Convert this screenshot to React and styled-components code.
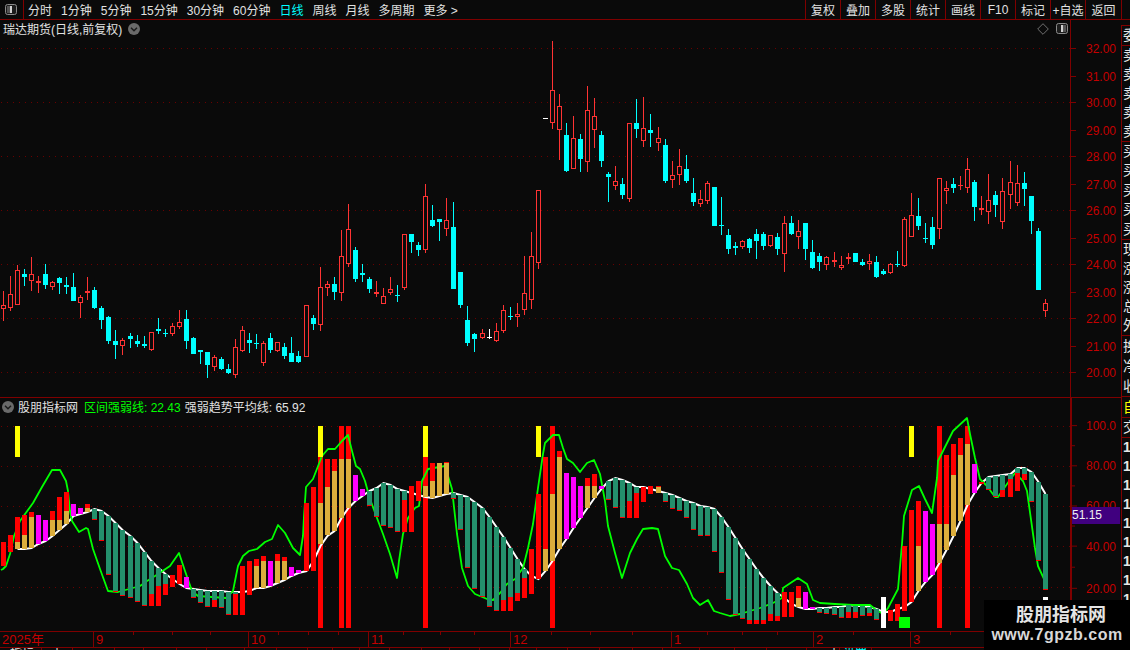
import React from "react";
import styled, { createGlobalStyle } from "styled-components";

const BG = "#0a0a0a";
const GRID = "#7f0000";
const AXIS_TEXT = "#c40000";
const CANDLE_RED = "#ff3333";
const CANDLE_CYAN = "#00ffff";
const T = "#24906c";
const R = "#ff0000";
const G = "#dcae3c";
const M = "#ff00ff";

// [high, body top, body bottom, low, kind], all in page pixels
const CANDLES = [
  [291,305,309,321,"r"],[276,294,308,311,"r"],[265,270,305,305,"r"],[269,274,277,286,"c"],[257,274,281,291,"r"],
  [276,281,283,293,"r"],[264,274,285,289,"c"],[281,282,287,290,"r"],[277,278,283,294,"c"],[277,285,287,294,"c"],
  [273,287,301,301,"c"],[295,297,303,318,"r"],[277,291,293,300,"r"],[287,290,308,309,"c"],[306,308,320,329,"c"],
  [316,317,341,344,"c"],[330,341,345,359,"c"],[338,340,346,355,"r"],[333,336,339,348,"c"],[335,341,344,347,"c"],
  [336,344,346,348,"c"],[332,332,350,351,"r"],[318,329,331,334,"c"],[329,333,334,337,"c"],[323,326,334,336,"r"],
  [310,322,327,329,"r"],[310,319,341,349,"c"],[337,338,354,354,"c"],[350,350,352,364,"c"],[352,352,365,378,"c"],
  [355,357,367,371,"r"],[357,359,369,370,"c"],[364,369,373,374,"c"],[339,347,375,378,"r"],[326,330,351,352,"r"],
  [333,340,343,353,"c"],[334,343,344,349,"c"],[341,343,363,366,"r"],[333,338,350,353,"c"],[342,342,351,352,"r"],
  [343,347,356,359,"c"],[337,353,362,362,"c"],[351,356,362,363,"c"],[305,305,357,357,"r"],[315,318,324,330,"c"],
  [267,287,325,331,"r"],[281,284,288,296,"r"],[277,284,292,300,"c"],[230,256,293,301,"r"],[204,229,264,267,"r"],
  [247,250,279,282,"c"],[264,273,275,282,"c"],[277,279,289,293,"c"],[281,292,294,297,"r"],[288,296,304,304,"r"],
  [277,289,293,295,"r"],[285,295,296,302,"c"],[234,234,288,290,"r"],[234,234,242,253,"c"],[242,245,250,256,"c"],
  [184,196,250,253,"r"],[205,220,226,227,"c"],[219,219,222,241,"c"],[198,220,229,236,"r"],[202,227,289,289,"c"],
  [272,272,305,308,"c"],[306,320,343,346,"c"],[333,334,339,352,"c"],[329,333,338,339,"r"],[329,337,338,339,"w"],
  [323,331,341,342,"r"],[305,310,331,333,"r"],[307,316,317,320,"c"],[303,314,317,327,"r"],[256,293,310,315,"r"],
  [232,256,300,309,"r"],[190,190,263,269,"r"],[118,118,119,119,"w"],[41,90,123,129,"r"],[94,106,130,160,"r"],
  [123,135,171,172,"c"],[116,138,169,169,"r"],[134,139,159,172,"c"],[86,110,162,172,"r"],[98,116,130,148,"r"],
  [131,135,161,167,"c"],[172,174,177,202,"c"],[166,181,186,190,"r"],[178,184,195,199,"c"],[123,123,199,202,"r"],
  [99,123,129,138,"c"],[97,128,141,147,"r"],[114,130,133,147,"c"],[127,138,143,151,"r"],[139,145,181,183,"c"],
  [161,175,180,188,"r"],[149,166,175,185,"r"],[155,169,181,183,"c"],[178,193,202,206,"c"],[190,199,204,207,"r"],
  [181,183,201,204,"r"],[187,187,226,226,"c"],[197,225,226,235,"c"],[229,235,249,254,"c"],[242,246,248,255,"c"],
  [240,241,247,249,"r"],[238,239,248,253,"c"],[229,234,241,259,"c"],[232,234,246,250,"c"],[235,235,246,247,"r"],
  [233,237,249,255,"c"],[216,223,254,272,"r"],[216,223,234,235,"c"],[220,231,237,249,"r"],[223,223,249,260,"c"],
  [240,252,268,269,"c"],[253,256,262,271,"c"],[256,257,265,270,"r"],[252,260,262,267,"r"],[256,265,268,270,"r"],
  [253,257,259,264,"r"],[253,253,262,262,"c"],[259,262,265,266,"c"],[254,261,264,270,"r"],[256,262,277,278,"c"],
  [269,271,274,275,"c"],[263,264,273,274,"r"],[251,264,265,267,"c"],[217,219,266,267,"r"],[193,215,237,237,"r"],
  [198,216,226,230,"c"],[223,238,239,243,"c"],[217,227,245,249,"c"],[178,178,229,239,"r"],[181,188,191,204,"r"],
  [178,184,188,193,"c"],[176,185,186,190,"r"],[158,169,188,193,"r"],[180,182,207,221,"c"],[196,208,210,215,"r"],
  [174,200,212,224,"r"],[191,195,205,217,"c"],[178,191,222,229,"r"],[161,182,195,209,"r"],[165,183,203,206,"r"],
  [172,183,189,206,"c"],[196,196,221,234,"c"],[228,231,290,290,"c"],[299,303,311,317,"r"],
];

// stacked indicator bars per candle: colour, y1, y2, colour, y1, y2 ...
const STACKS = [
  [R,541,565],[R,534,551],[R,516,541,G,541,548],[R,514,534,G,534,548],[R,511,516,G,516,547],
  [M,514,543],[M,519,540],[R,510,519,G,519,535],[R,496,519,G,519,529],[R,491,510,G,510,523],
  [M,503,515],[M,507,513],[R,503,507,G,507,511],[T,508,518,R,518,519],[T,510,539,R,539,540],
  [T,515,573,R,573,574],[T,522,590,R,590,591],[T,529,594,R,594,595],[T,535,596,R,596,597],[T,542,600,R,600,601],
  [T,551,604,R,604,605],[T,560,593,R,593,605],[T,567,585,R,585,605],[T,573,583,R,583,594],[R,574,586],
  [R,564,583],[M,576,587],[T,588,596,R,596,597],[T,589,601,R,601,602],[T,590,605,R,605,606],
  [T,590,599,R,599,606],[T,590,606,R,606,607],[T,591,613,R,613,614],[T,591,593,R,593,614],[R,565,614],
  [R,560,594],[R,558,565,G,565,587],[R,555,560,G,560,587],[M,560,585],[R,553,560,G,560,582],
  [R,556,560,G,560,579],[M,566,575],[M,569,572],[R,502,570],[R,486,570],
  [G,502,543],[R,458,486,G,486,534],[R,458,470,G,470,530],[G,458,517],[G,458,507],
  [M,474,500],[M,488,495],[T,490,504,R,504,505],[T,487,515,R,515,516],[T,482,524,R,524,525],
  [T,484,526,R,526,527],[T,488,530,R,530,531],[T,490,499,R,499,531],[R,485,531],[R,480,500],
  [G,485,496],[R,462,480,G,480,497],[G,462,495],[R,461,462,G,462,493],[T,492,497,R,497,498],
  [T,494,528,R,528,529],[T,496,566,R,566,567],[T,501,587,R,587,588],[T,507,595,R,595,596],[T,516,605,R,605,606],
  [T,526,609,R,609,610],[T,536,599,R,599,610],[T,547,596,R,596,610],[T,558,592,R,592,600],[T,568,577,R,577,597],
  [R,548,593],[R,493,578],[R,456,548,G,548,570],[G,493,560],[R,450,456,G,456,548],
  [M,472,538],[M,476,527],[M,485,517],[R,477,485,G,485,507],[R,473,485,G,485,497],
  [M,485,488],[T,480,498,R,498,499],[T,477,506,R,506,507],[T,479,516,R,516,517],[T,482,500,R,500,517],
  [T,486,492,R,492,517],[R,486,501],[R,485,493],[R,485,486,G,486,492],[T,492,500,R,500,501],
  [T,494,507,R,507,508],[T,497,509,R,509,510],[T,500,516,R,516,517],[T,502,528,R,528,529],[T,505,534,R,534,535],
  [T,506,534,R,534,535],[T,508,550,R,550,551],[T,516,571,R,571,572],[T,526,598,R,598,599],[T,537,613,R,613,614],
  [T,548,617,R,617,618],[T,558,619,R,619,623],[T,568,619,R,619,623],[T,577,619,R,619,623],[T,585,613,R,613,620],
  [T,592,615,R,615,620],[R,591,616],[R,591,616],[R,585,597,G,597,606],[M,591,608],
  [M,606,608],[T,607,611,R,611,612],[T,607,612,R,612,613],[T,606,613,R,613,614],[T,606,616,R,616,617],
  [T,604,611,R,611,617],[T,605,611,R,611,617],[T,605,614,R,614,615],[T,606,612,R,612,615],[T,608,618,R,618,619],
  ["#ffffff",596,627],[R,609,620],[R,603,620],[R,545,610],[R,509,601],
  [R,500,545,G,545,590],[M,510,581],[M,523,574],[G,523,562],[R,454,523,G,523,549],
  [R,443,474,G,474,535],[R,437,454,G,454,520],[G,443,504],[M,463,492],[R,481,483],
  [T,476,488,R,488,489],[T,475,495,R,495,496],[T,474,489,R,489,496],[T,473,478,R,478,496],[T,467,472,R,472,490],
  [T,467,473,R,473,479],[T,471,500,R,500,501],[T,481,559,R,559,560],[T,493,588,R,588,589,"#ffffff",596,602],
];

const FULL_BARS = [[45,456],[48,425],[49,425],[60,456],[78,425],[133,425],[137,425]];
const SIGNAL_BARS = [2,45,60,76,129];

const AVERAGE_LINE = [
  565,551,548,548,547,543,540,535,529,523,515,513,511,508,510,515,522,529,535,542,551,560,567,573,578,583,587,588,589,590,
  590,590,591,591,591,590,587,587,585,582,579,575,572,570,560,545,535,530,517,507,500,495,490,487,482,484,488,490,492,494,
  496,497,495,493,492,494,496,501,507,516,526,536,547,558,568,575,578,570,560,548,538,527,517,507,497,488,480,477,479,482,
  486,486,488,490,492,494,497,500,502,505,506,508,516,526,537,548,558,568,577,585,592,597,603,606,608,608,607,607,606,606,
  604,605,605,606,608,611,611,608,606,601,590,581,574,562,549,535,520,504,492,482,476,475,474,473,467,467,471,481,493,
];

const STRENGTH_LINE = [
  [1,569],[3,568],[6,565],[10,553],[14,535],[20,520],[33,502],[42,486],[52,469],[60,469],[66,480],[68,490],[70,510],[72,520],[79,531],
  [86,527],[88,528],[93,548],[100,568],[108,590],[118,591],[140,585],[147,580],[155,575],[170,565],[179,552],[185,570],[192,590],[198,595],
  [226,597],[233,590],[238,565],[243,555],[249,550],[257,548],[265,541],[272,538],[278,524],[285,532],[293,547],[300,554],[303,535],[304,515],
  [306,486],[313,478],[322,455],[328,448],[335,448],[342,440],[348,434],[352,450],[356,465],[360,468],[365,480],[370,498],[377,517],[383,533],
  [390,553],[397,577],[399,560],[403,533],[408,517],[415,507],[419,505],[422,480],[428,468],[445,465],[452,488],[457,533],[462,567],[468,585],
  [475,593],[487,598],[493,599],[500,592],[507,583],[515,578],[523,567],[528,547],[533,523],[538,487],[543,453],[545,442],[553,434],[559,434],
  [563,447],[567,458],[573,462],[580,471],[587,462],[594,459],[600,473],[605,500],[608,525],[615,552],[622,577],[630,552],[637,538],[643,528],
  [652,527],[658,528],[665,555],[672,567],[679,569],[687,583],[693,597],[700,604],[708,599],[714,610],[720,612],[730,615],[740,613],[760,607],
  [773,602],[782,597],[783,587],[798,577],[807,583],[813,599],[820,602],[835,603],[853,604],[870,604],[875,608],[883,613],[888,607],[898,588],
  [902,543],[904,515],[912,489],[919,485],[925,498],[932,512],[937,477],[938,460],[947,442],[953,430],[967,417],[970,433],[975,457],[980,478],
  [987,485],[995,496],[998,496],[1007,483],[1015,472],[1023,480],[1027,490],[1035,547],[1038,565],[1044,578],
];

const PRICE_TICKS = ["32.00","31.00","30.00","29.00","28.00","27.00","26.00","25.00","24.00","23.00","22.00","21.00","20.00"];
const PRICE_GRID = [48,102,156,210,264,318,372];
const INDICATOR_TICKS = [["100.0",425],["80.00",465],["60.00",505],["40.00",545],["20.00",587]];
const INDICATOR_MINOR = [445,485,525,566,607];

const MONTHS = [["2025年",94],["9",155],["10",120],["11",142],["12",161],["1",142],["2",97],["3",210]];
const TIME_TICKS = [133,172,210,278,308,338,403,440,474,551,590,632,707,742,777,853,950,990,1030];
const TAB_EDGES = [42,73,115,144,177,207,245,277,308,333,360,390,422,450,480,510,537,568,600,633,663,700,735,767,807,840,872];

const PERIODS = ["分时","1分钟","5分钟","15分钟","30分钟","60分钟","日线","周线","月线","多周期","更多 >"];
const ACTIONS = ["复权","叠加","多股","统计","画线","F10","标记","+自选","返回"];
const SIDE_GROUPS = [
  { height: 19, rows: ["委"] },
  { height: 19, rows: ["卖","卖","卖","卖","卖"] },
  { height: 19.4, rows: ["买","买","买","买","买"] },
  { height: 19, rows: ["现","涨","涨","总","外"] },
  { height: 20, rows: ["换","净","收"] },
];

const barLeft = (i) => Math.round(3.3 + 7.04 * i - 2.5);

const GlobalStyle = createGlobalStyle`
  html, body {
    margin: 0;
    background: ${BG};
  }
  body {
    font-family: "Liberation Sans", "Noto Sans CJK SC", sans-serif;
    font-size: 12px;
  }
`;

const Terminal = styled.div`
  position: relative;
  width: 1130px;
  height: 650px;
  overflow: hidden;
  display: flex;
  flex-direction: column;
  background: ${BG};
  color: #e2e2e2;
`;

const Toolbar = styled.div`
  flex: 0 0 20px;
  box-sizing: border-box;
  display: flex;
  align-items: stretch;
  padding-right: 8px;
  border-bottom: 1px solid ${GRID};
`;

const ToggleBox = styled.div`
  flex: 0 0 24px;
  box-sizing: border-box;
  display: flex;
  align-items: center;
  justify-content: center;
  padding-right: 1px;
  border-right: 1px solid ${GRID};
`;

const PeriodList = styled.div`
  display: flex;
  align-items: center;
  gap: 9px;
  padding-left: 4px;
`;

const Period = styled.span`
  color: ${(p) => (p.$active ? "#00ffff" : "#e2e2e2")};
  white-space: nowrap;
`;

const ActionList = styled.div`
  margin-left: auto;
  display: flex;
`;

const Action = styled.div`
  width: 35px;
  box-sizing: border-box;
  display: flex;
  align-items: center;
  justify-content: center;
  white-space: nowrap;
  border-left: 1px solid ${GRID};
  &:last-child {
    width: 37px;
    border-right: 1px solid ${GRID};
  }
`;

const Workspace = styled.div`
  flex: 1;
  display: flex;
  min-height: 0;
`;

const ChartColumn = styled.div`
  flex: 0 0 1121px;
  display: flex;
  flex-direction: column;
`;

const Pane = styled.div`
  flex: 0 0 ${(p) => p.$height}px;
  box-sizing: border-box;
  display: flex;
  border-bottom: ${(p) => (p.$ruled ? `1px solid ${GRID}` : "none")};
`;

const Plot = styled.div`
  flex: 0 0 1070px;
  display: flex;
  flex-direction: column;
`;

const PaneHeader = styled.div`
  flex: 0 0 ${(p) => p.$height}px;
  box-sizing: border-box;
  display: flex;
  align-items: center;
  gap: ${(p) => p.$gap || 0}px;
  padding-left: ${(p) => p.$inset}px;
  padding-bottom: ${(p) => p.$lift || 0}px;
  white-space: nowrap;
`;

const PaneTools = styled.div`
  margin-left: auto;
  display: flex;
  align-items: center;
  gap: 7px;
  padding-right: 2px;
`;

const Legend = styled.span`
  color: ${(p) => p.$color};
  margin-left: ${(p) => p.$shift || 0}px;
`;

const ChartSvg = styled.svg`
  display: block;
  width: 1070px;
  flex: 1;
`;

const Axis = styled.div`
  position: relative;
  flex: 0 0 51px;
  box-sizing: border-box;
  border-left: ${(p) => p.$rule}px solid ${GRID};
`;

const AxisSvg = styled.svg`
  display: block;
  width: 100%;
  height: 100%;
  font-family: "Liberation Sans", sans-serif;
  font-size: 12px;
`;

const PriceTag = styled.div`
  position: absolute;
  left: 0;
  right: 1px;
  top: 109px;
  height: 17px;
  line-height: 17px;
  background: #40007f;
  color: #f0f0f0;
`;

const TimeAxis = styled.div`
  position: relative;
  flex: 0 0 17px;
  box-sizing: border-box;
  display: flex;
  border-top: 1px solid ${GRID};
  border-bottom: 1px solid ${GRID};
`;

const Month = styled.div`
  flex: 0 0 ${(p) => p.$width}px;
  box-sizing: border-box;
  padding-left: 2px;
  font-size: 13px;
  line-height: 15px;
  color: ${AXIS_TEXT};
  border-right: 1px solid ${GRID};
  &:last-child {
    border-right: none;
  }
`;

const TimeTick = styled.i`
  position: absolute;
  top: 0;
  width: 1px;
  height: 3px;
  background: ${GRID};
`;

const TabStrip = styled.div`
  flex: 1;
  display: flex;
  overflow: hidden;
`;

const Tab = styled.div`
  flex: 0 0 ${(p) => p.$width}px;
  box-sizing: border-box;
  padding-left: ${(p) => p.$pad || 0}px;
  line-height: 12px;
  overflow: hidden;
  white-space: nowrap;
  color: ${(p) => p.$color || "#e2e2e2"};
  border-right: 1px solid ${GRID};
`;

const SidePanel = styled.div`
  flex: 1;
  box-sizing: border-box;
  display: flex;
  flex-direction: column;
  padding-top: 5px;
  overflow: hidden;
`;

const SideGroup = styled.div`
  flex: 0 0 auto;
  box-sizing: border-box;
  border-top: 1px solid ${GRID};
  border-left: 1px solid ${GRID};
  padding-left: 1px;
`;

const SideRow = styled.div`
  height: ${(p) => p.$height}px;
  line-height: ${(p) => p.$height}px;
  font-size: 14px;
  font-weight: ${(p) => (p.$bold ? 700 : 400)};
  color: ${(p) => p.$color || "#e6e6e6"};
  white-space: nowrap;
`;

const Watermark = styled.div`
  position: absolute;
  right: 0;
  bottom: 0;
  width: 146px;
  height: 50px;
  background: #000;
  display: flex;
  flex-direction: column;
  align-items: center;
  color: #e4e4e4;
  font-weight: 700;
`;

const WatermarkName = styled.div`
  margin-top: 4px;
  padding-left: 8px;
  font-size: 18px;
  line-height: 22px;
`;

const WatermarkSite = styled.div`
  font-size: 16px;
  line-height: 18px;
  letter-spacing: 0.5px;
  color: #d8d8d8;
`;

function ToggleIcon({ flip }) {
  return (
    <svg width="12" height="11" viewBox="0 0 12 11">
      <rect x="0.5" y="0.5" width="11" height="10" rx="2" fill="#1c1c1c" stroke="#8a8a8a" />
      <rect x={flip ? 2 : 7} y="2" width="3" height="7" fill="#555" />
      <rect x="5" y="2" width="2" height="7" fill="#d0d0d0" />
    </svg>
  );
}

function CircleChevron() {
  return (
    <svg width="12" height="12" viewBox="0 0 12 12">
      <circle cx="6" cy="6" r="6" fill="#6a6a6a" />
      <path d="M3 4.8 L6 7.8 L9 4.8" fill="none" stroke="#1a1a1a" strokeWidth="1.4" />
    </svg>
  );
}

function Candle({ index, candle }) {
  const [hi, top, bottom, lo, kind] = candle;
  const x = barLeft(index);
  const color = kind === "r" ? CANDLE_RED : kind === "c" ? CANDLE_CYAN : "#ffffff";
  const height = bottom - top;
  return (
    <g>
      {top > hi && <rect x={x + 2} y={hi} width="1" height={top - hi} fill={color} />}
      {lo > bottom && <rect x={x + 2} y={bottom} width="1" height={lo - bottom} fill={color} />}
      {kind === "r" && height > 2 ? (
        <rect x={x + 0.5} y={top + 0.5} width="4" height={height - 1} fill={BG} stroke={color} />
      ) : (
        <rect x={x} y={top} width="5" height={Math.max(height, 1)} fill={color} />
      )}
    </g>
  );
}

function GridLines({ rows, width = 1070 }) {
  return rows.map((y) => (
    <line key={y} x1="1" x2={width} y1={y + 0.5} y2={y + 0.5} stroke="#6a0000" strokeDasharray="1 5" />
  ));
}

function PriceChart() {
  return (
    <ChartSvg viewBox="0 37 1070 360" preserveAspectRatio="none" shapeRendering="crispEdges">
      <GridLines rows={PRICE_GRID} />
      {CANDLES.map((candle, i) => (
        <Candle key={i} index={i} candle={candle} />
      ))}
    </ChartSvg>
  );
}

function IndicatorChart() {
  const average = AVERAGE_LINE.slice(2).map((y, i) => `${barLeft(i + 2) + 2.5},${y}`).join(" ");
  const strength = STRENGTH_LINE.map((p) => p.join(",")).join(" ");
  return (
    <ChartSvg viewBox="0 416 1070 214" preserveAspectRatio="none">
      <g shapeRendering="crispEdges">
        <GridLines rows={[425, 465, 505, 545, 586]} />
        {FULL_BARS.map(([i, y]) => (
          <rect key={i} x={barLeft(i)} y={y} width="5" height={627 - y} fill={R} />
        ))}
      </g>
      <polyline points={average} fill="none" stroke="#ffffff" strokeWidth="2" />
      <polyline points={strength} fill="none" stroke="#00ff00" strokeWidth="1.8" strokeLinejoin="round" />
      <g shapeRendering="crispEdges">
        {STACKS.map((stack, i) => {
          const parts = [];
          for (let k = 0; k < stack.length; k += 3) {
            parts.push(
              <rect key={k} x={barLeft(i)} y={stack[k + 1]} width="5" height={stack[k + 2] - stack[k + 1]} fill={stack[k]} />
            );
          }
          return <g key={i}>{parts}</g>;
        })}
        {SIGNAL_BARS.map((i) => (
          <rect key={i} x={barLeft(i)} y="425" width="5" height="31" fill="#ffff00" />
        ))}
        <rect x="899" y="616" width="11" height="11" fill="#00ff00" />
      </g>
    </ChartSvg>
  );
}

function PriceAxis() {
  return (
    <AxisSvg viewBox="0 20 50 377" preserveAspectRatio="none">
      {PRICE_TICKS.map((label, i) => {
        const y = 48 + 27 * i + (i % 2);
        return (
          <g key={label}>
            <rect x="0" y={y} width="5" height="1" fill={GRID} />
            <text x="15" y={y + 5} fill={AXIS_TEXT}>{label}</text>
          </g>
        );
      })}
    </AxisSvg>
  );
}

function IndicatorAxis() {
  return (
    <Axis $rule={2}>
      <AxisSvg viewBox="0 398 49 232" preserveAspectRatio="none">
        {INDICATOR_TICKS.map(([label, y]) => (
          <g key={label}>
            <rect x="0" y={y} width="5" height="1" fill={GRID} />
            <text x="14" y={y + 5} fill={AXIS_TEXT}>{label}</text>
          </g>
        ))}
        {INDICATOR_MINOR.map((y) => (
          <rect key={y} x="0" y={y} width="3" height="1" fill={GRID} />
        ))}
      </AxisSvg>
      <PriceTag>51.15</PriceTag>
    </Axis>
  );
}

function TimeRow() {
  return (
    <TimeAxis>
      {MONTHS.map(([label, width]) => (
        <Month key={label} $width={width}>{label}</Month>
      ))}
      {TIME_TICKS.map((x) => (
        <TimeTick key={x} style={{ left: x }} />
      ))}
    </TimeAxis>
  );
}

function Tabs() {
  return (
    <TabStrip>
      {TAB_EDGES.map((edge, i) => {
        const width = edge - (i ? TAB_EDGES[i - 1] : 0);
        if (i === 0) return <Tab key={edge} $width={width} $pad={10}>指标</Tab>;
        if (i === 1) return <Tab key={edge} $width={width} $pad={9}>十</Tab>;
        if (i === 25) return <Tab key={edge} $width={width} $pad={21}>十</Tab>;
        if (i === 26) return <Tab key={edge} $width={width} $pad={3} $color="#00ffff">设置</Tab>;
        return <Tab key={edge} $width={width} />;
      })}
    </TabStrip>
  );
}

function SideList() {
  return (
    <SidePanel>
      {SIDE_GROUPS.map((group, i) => (
        <SideGroup key={i}>
          {group.rows.map((text, k) => (
            <SideRow key={k} $height={group.height}>{text}</SideRow>
          ))}
        </SideGroup>
      ))}
      <SideGroup>
        <SideRow $height={20} $color="#ffff00">自</SideRow>
      </SideGroup>
      <SideGroup>
        <SideRow $height={19}>交</SideRow>
      </SideGroup>
      <SideGroup>
        {Array.from({ length: 11 }, (_, i) => (
          <SideRow key={i} $height={19} $bold>1</SideRow>
        ))}
      </SideGroup>
    </SidePanel>
  );
}

export default function App() {
  return (
    <>
      <GlobalStyle />
      <Terminal>
        <Toolbar>
          <ToggleBox><ToggleIcon flip /></ToggleBox>
          <PeriodList>
            {PERIODS.map((p) => (
              <Period key={p} $active={p === "日线"}>{p}</Period>
            ))}
          </PeriodList>
          <ActionList>
            {ACTIONS.map((a) => (
              <Action key={a}>{a}</Action>
            ))}
          </ActionList>
        </Toolbar>
        <Workspace>
          <ChartColumn>
            <Pane $height={378} $ruled>
              <Plot>
                <PaneHeader $height={17} $inset={3} $gap={6}>
                  <span>瑞达期货(日线,前复权)</span>
                  <CircleChevron />
                  <PaneTools>
                    <svg width="12" height="12" viewBox="0 0 12 12">
                      <path d="M6 0.7 L11.3 6 L6 11.3 L0.7 6 Z" fill="none" stroke="#707070" />
                    </svg>
                    <ToggleIcon />
                  </PaneTools>
                </PaneHeader>
                <PriceChart />
              </Plot>
              <Axis $rule={1}>
                <PriceAxis />
              </Axis>
            </Pane>
            <Pane $height={232}>
              <Plot>
                <PaneHeader $height={18} $inset={2} $gap={4} $lift={2}>
                  <CircleChevron />
                  <span>股朋指标网</span>
                  <Legend $color="#00ff00" $shift={2}>区间强弱线: 22.43</Legend>
                  <span>强弱趋势平均线: 65.92</span>
                </PaneHeader>
                <IndicatorChart />
              </Plot>
              <IndicatorAxis />
            </Pane>
            <TimeRow />
            <Tabs />
          </ChartColumn>
          <SideList />
        </Workspace>
        <Watermark>
          <WatermarkName>股朋指标网</WatermarkName>
          <WatermarkSite>www.7gpzb.com</WatermarkSite>
        </Watermark>
      </Terminal>
    </>
  );
}
